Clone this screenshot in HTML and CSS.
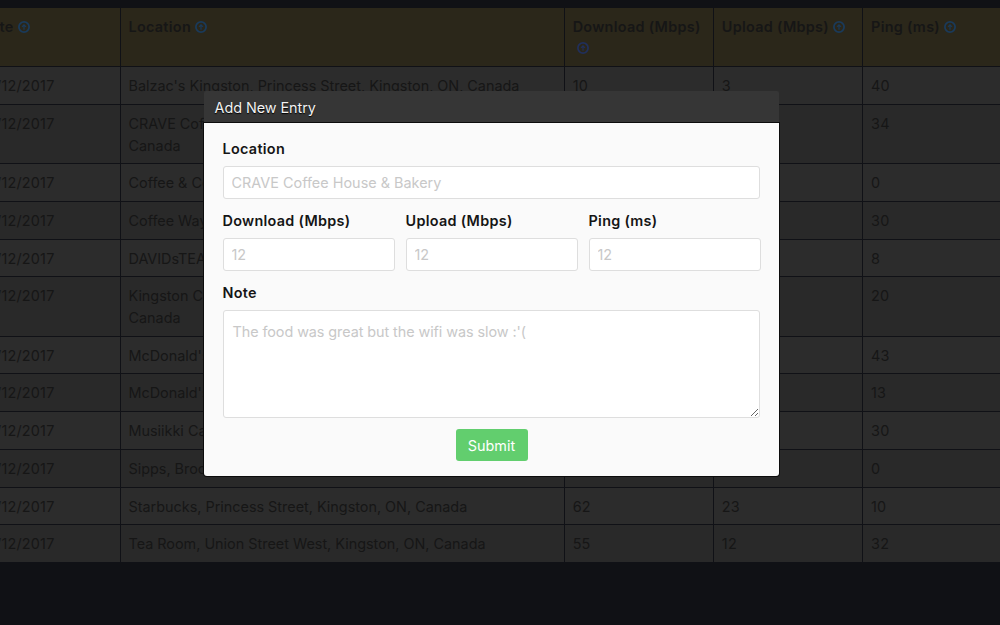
FILE: index.html
```html
<!DOCTYPE html>
<html lang="en">
<head>
<meta charset="utf-8">
<title>Add New Entry</title>
<link rel="stylesheet" href="styles.css">
</head>
<body>
<svg class="defs" aria-hidden="true"><symbol id="up" viewBox="0 0 12 12"><circle cx="6" cy="6" r="5.1" fill="none" stroke="currentColor" stroke-width="1.8"/><path d="M6 8.8V4M4 5.8l2-2 2 2" fill="none" stroke="currentColor" stroke-width="1.2"/></symbol></svg>
<main class="table">
<div class="row head"><div class="date">Date <svg class="sort"><use href="#up"/></svg></div><div>Location <svg class="sort"><use href="#up"/></svg></div><div>Download (Mbps) <svg class="sort wrapped"><use href="#up"/></svg></div><div>Upload (Mbps) <svg class="sort"><use href="#up"/></svg></div><div>Ping (ms) <svg class="sort"><use href="#up"/></svg></div></div>
<div class="row"><div class="date">11/12/2017</div><div>Balzac's Kingston, Princess Street, Kingston, ON, Canada</div><div>10</div><div>3</div><div>40</div></div>
<div class="row tall"><div class="date">11/12/2017</div><div>CRAVE Coffee<br>Canada</div><div></div><div></div><div>34</div></div>
<div class="row"><div class="date">11/12/2017</div><div>Coffee &amp; Co</div><div></div><div></div><div>0</div></div>
<div class="row"><div class="date">11/12/2017</div><div>Coffee Way</div><div></div><div></div><div>30</div></div>
<div class="row"><div class="date">11/12/2017</div><div>DAVIDsTEA</div><div></div><div></div><div>8</div></div>
<div class="row tall"><div class="date">11/12/2017</div><div>Kingston Co<br>Canada</div><div></div><div></div><div>20</div></div>
<div class="row"><div class="date">11/12/2017</div><div>McDonald's</div><div></div><div></div><div>43</div></div>
<div class="row"><div class="date">11/12/2017</div><div>McDonald's</div><div></div><div></div><div>13</div></div>
<div class="row"><div class="date">11/12/2017</div><div>Musiikki Caf</div><div></div><div></div><div>30</div></div>
<div class="row"><div class="date">11/12/2017</div><div>Sipps, Brock</div><div></div><div></div><div>0</div></div>
<div class="row"><div class="date">11/12/2017</div><div>Starbucks, Princess Street, Kingston, ON, Canada</div><div>62</div><div>23</div><div>10</div></div>
<div class="row"><div class="date">11/12/2017</div><div>Tea Room, Union Street West, Kingston, ON, Canada</div><div>55</div><div>12</div><div>32</div></div>
</main>
<section class="modal" role="dialog" aria-label="Add New Entry">
<header class="title">Add New Entry</header>
<form class="form">
<label class="field">Location<input class="input" placeholder="CRAVE Coffee House &amp; Bakery"></label>
<div class="speeds">
<label class="field">Download (Mbps)<input class="input" placeholder="12"></label>
<label class="field">Upload (Mbps)<input class="input" placeholder="12"></label>
<label class="field">Ping (ms)<input class="input" placeholder="12"></label>
</div>
<label class="field">Note<textarea class="input note" placeholder="The food was great but the wifi was slow :'("></textarea></label>
<button class="submit" type="button">Submit</button>
</form>
</section>
</body>
</html>
```
FILE: styles.css
```css
* { box-sizing: border-box; }
body {
  margin: 0;
  height: 625px;
  overflow: hidden;
  padding-top: 8px;
  background: #101115;
  color: #161616;
  font: 14.4px/21.75px Inter, "Liberation Sans", sans-serif;
  letter-spacing: 0;
}
.defs { display: none; }
.row {
  display: grid;
  grid-template-columns: 119.5px 443px 148px 148px 1fr;
  column-gap: 1.2px;
  height: 37.75px;
  border-bottom: 1px solid #101116;
  background: #101116;
}
.row > div {
  padding: 8px 8px 7px 7.8px;
  background: #2c2c2c;
  white-space: nowrap;
  overflow: hidden;
}
.row:nth-child(odd) > div { background: #292929; }
.row.tall { height: 59.3px; }
.row.head { height: 59px; font-weight: 600; letter-spacing: .3px; }
.row.head > div { padding-top: 7.5px; background: #2b271a; white-space: normal; }
.row > .date {
  display: flex;
  align-items: flex-start;
  justify-content: flex-end;
  padding-right: 65px;
}
.row:not(.head) > div:not(:nth-child(2)) { letter-spacing: .2px; }
.row.head > .date { padding-right: 90px; gap: 4px; white-space: nowrap; }
.sort { width: 12px; height: 12px; color: #1a3a5a; vertical-align: -1px; flex: none; }
.date .sort { margin-top: 5px; }
.wrapped { margin-left: 4px; color: #212f5a; }

/* The dialog floats above the dimmed table. */
.modal {
  position: absolute;
  left: 204px;
  top: 91px;
  width: 575px;
  height: 385px;
  border-radius: 3px;
  color: #151515;
}
.title {
  height: 32px;
  padding: 5.5px 10.5px;
  background: #363636;
  color: #f2f2f2;
  text-shadow: 0 1px 1px #000;
  border-radius: 2px 2px 0 0;
  letter-spacing: -.05px;
}
.form {
  height: 353px;
  padding: 15px 18.5px;
  display: flex;
  flex-direction: column;
  gap: 11px;
  background: #fafafa;
  border-radius: 0 0 3px 3px;
  box-shadow: 0 0 0 1px #0c0c0c;
}
.field {
  display: flex;
  flex-direction: column;
  gap: 7px;
  min-width: 0;
  font-weight: 600;
  letter-spacing: .3px;
  line-height: 21px;
}
.speeds { display: grid; grid-template-columns: repeat(3, 1fr); gap: 11px; }
.input {
  width: 100%;
  height: 33px;
  padding: 0 8px;
  border: 1px solid #dedede;
  border-radius: 3px;
  background: #fff;
  color: #222;
  font: 14.4px/21.75px Inter, "Liberation Sans", sans-serif;
  letter-spacing: .02px;
}
.form > .field .input { width: 537.5px; }
.input::placeholder { color: #c8c8c8; opacity: 1; }
.note { height: 108px; padding: 10px 9px 9px; letter-spacing: -.07px; resize: vertical; display: block; }
.submit {
  align-self: center;
  width: 72px;
  height: 32px;
  padding: 1px 0 0;
  border: 0;
  border-radius: 3px;
  background: #62ce6e;
  color: #fff;
  font: inherit;
  letter-spacing: 0;
}
```
